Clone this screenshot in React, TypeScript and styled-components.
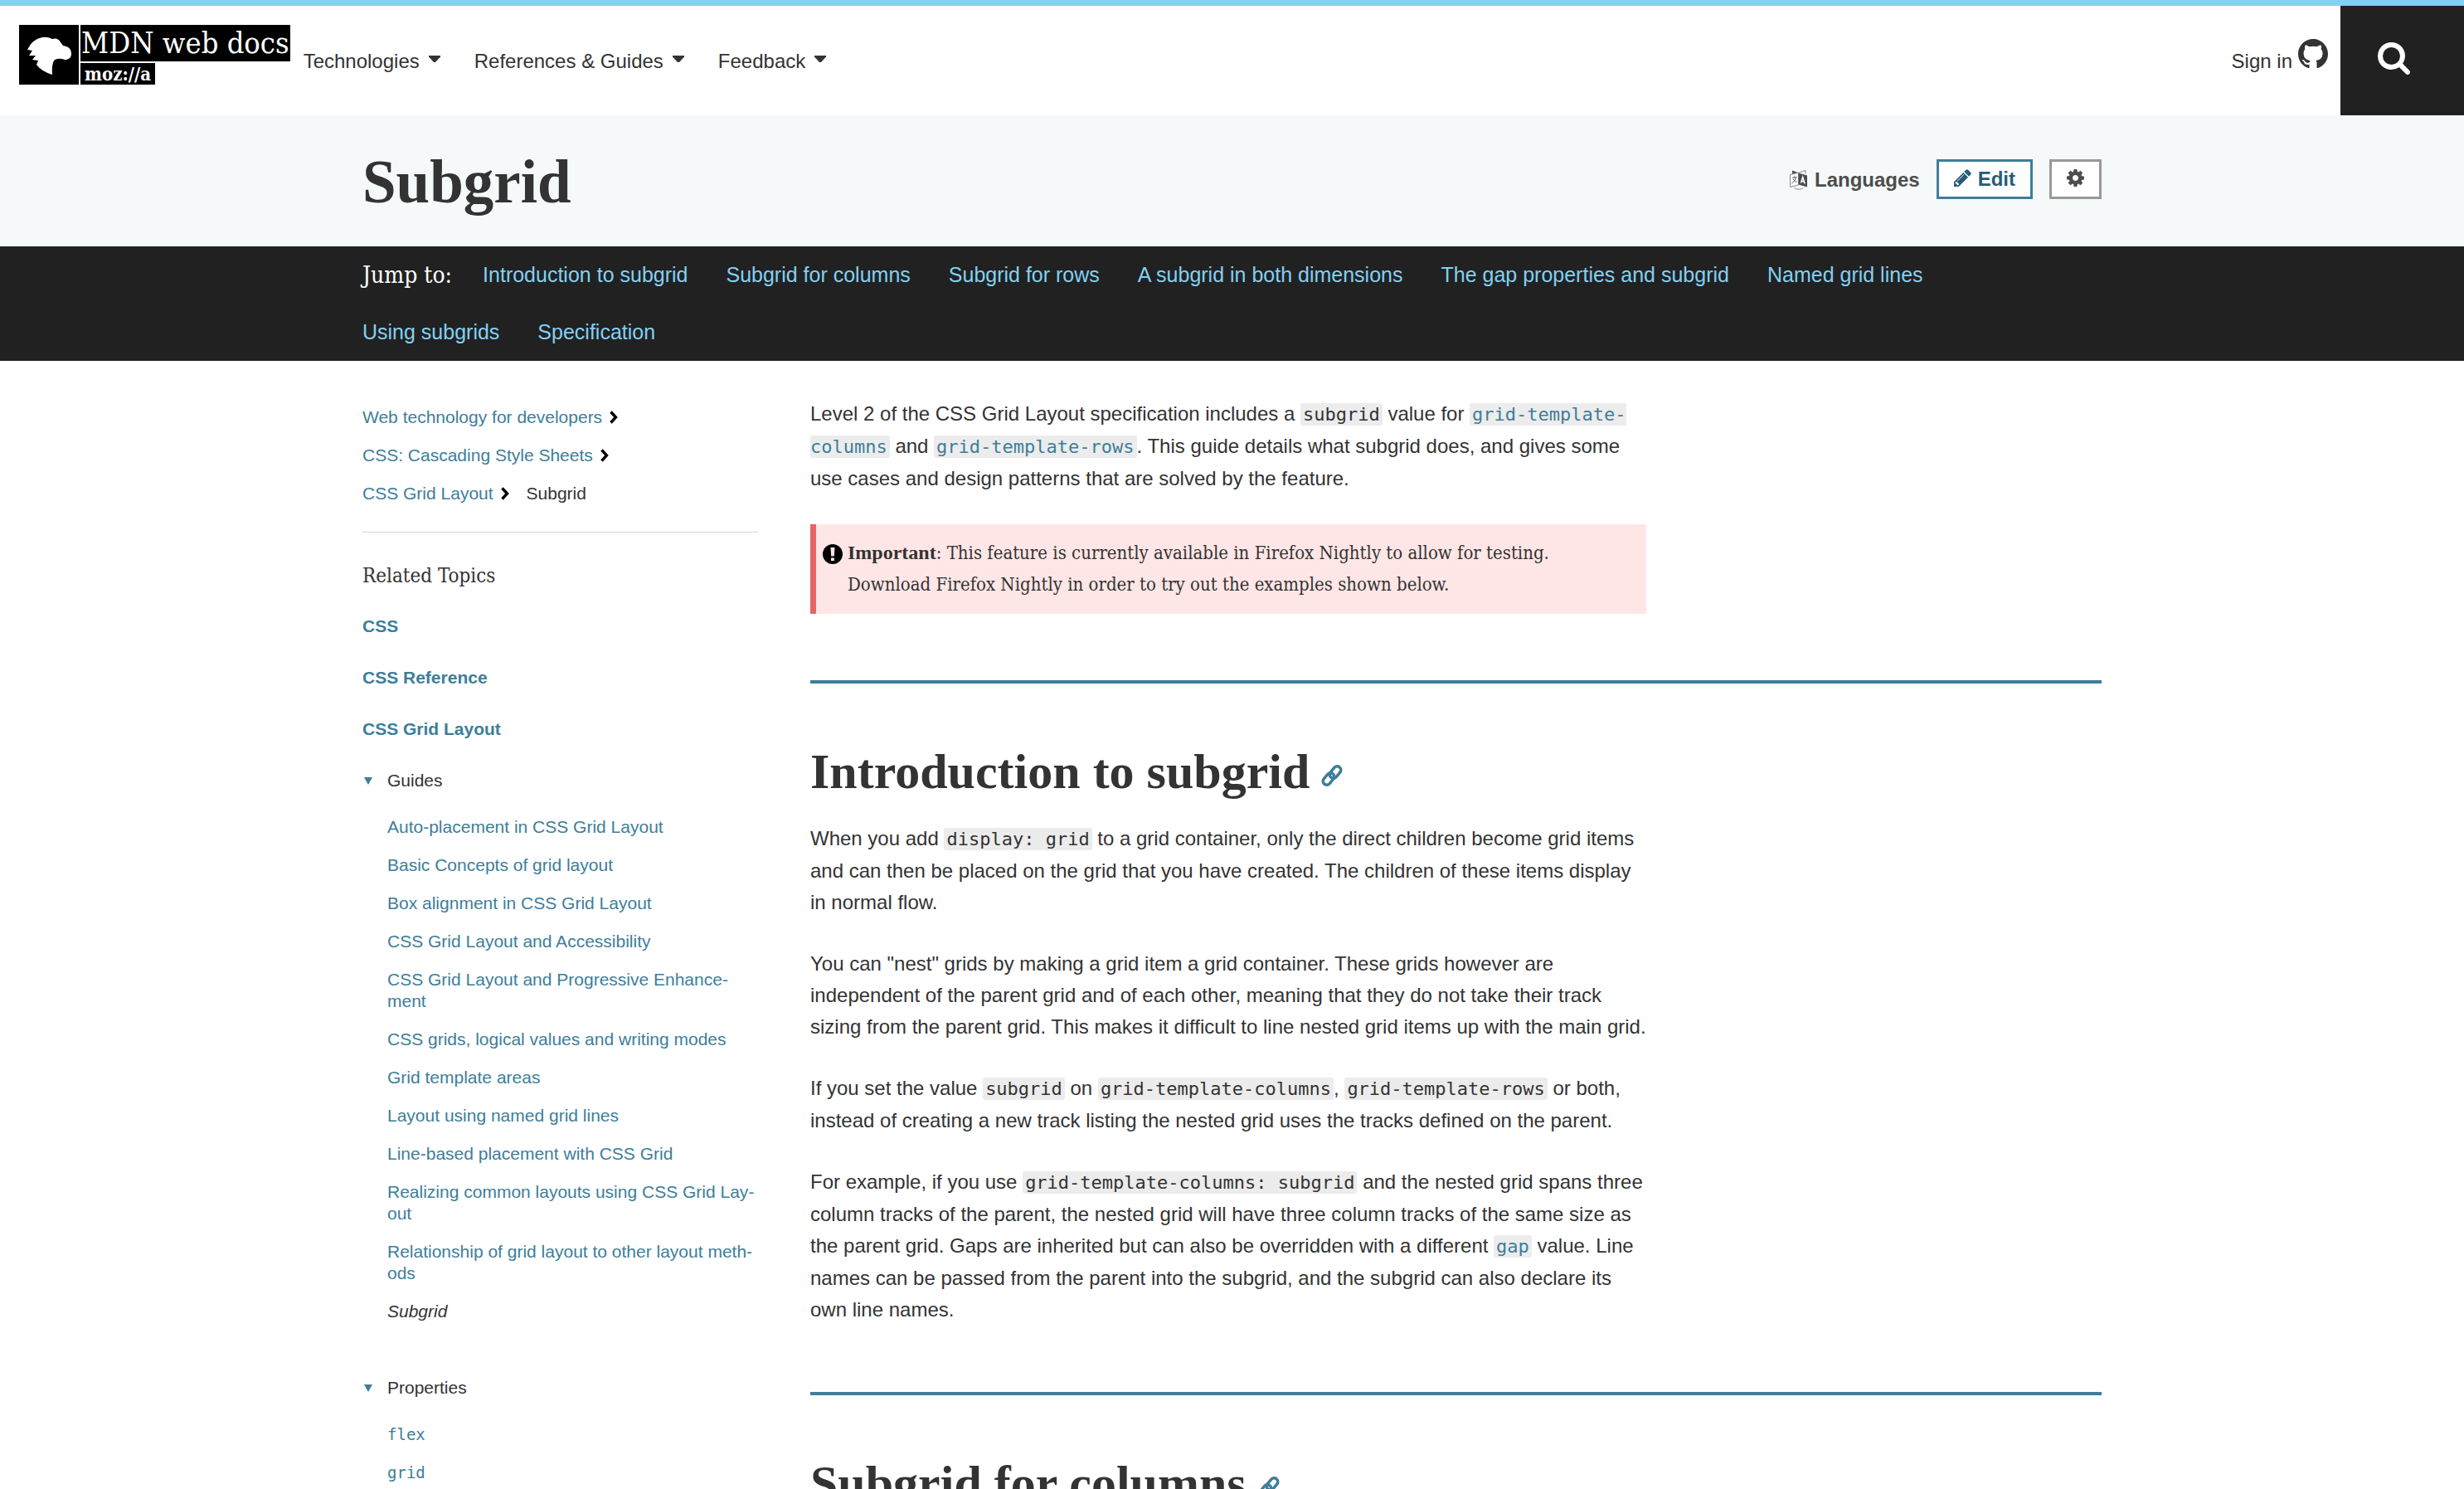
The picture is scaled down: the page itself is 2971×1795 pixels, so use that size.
import React from "react";
import styled, { createGlobalStyle } from "styled-components";

const sans = `"Liberation Sans", Arial, sans-serif`;
const slab = `"DejaVu Serif Condensed", "DejaVu Serif", serif`;
const serif = `"Liberation Serif", "Times New Roman", serif`;
const mono = `"DejaVu Sans Mono", "Liberation Mono", monospace`;

const ink = "#333";
const link = "#3d7e9a";
const dark = "#212121";

const GlobalStyle = createGlobalStyle`
  *, *::before, *::after { box-sizing: border-box; }
  body {
    margin: 0;
    background: #fff;
    color: ${ink};
    font: 24px/38px ${sans};
  }
  h1, h2, h3, p, ul, ol { margin: 0; padding: 0; }
  ul, ol { list-style: none; }
  a { color: ${link}; text-decoration: none; }
  button { font: inherit; color: inherit; cursor: pointer; }
  svg { display: block; flex: none; }
`;

/* ---------- icons ---------- */

const GithubIcon = () => (
  <svg width="36" height="36" viewBox="0 0 16 16" fill={ink} aria-hidden="true">
    <path d="M8 0C3.58 0 0 3.58 0 8c0 3.54 2.29 6.53 5.47 7.59.4.07.55-.17.55-.38 0-.19-.01-.82-.01-1.49-2.01.37-2.53-.49-2.69-.94-.09-.23-.48-.94-.82-1.13-.28-.15-.68-.52-.01-.53.63-.01 1.08.58 1.23.82.72 1.21 1.87.87 2.33.66.07-.52.28-.87.51-1.07-1.78-.2-3.64-.89-3.64-3.95 0-.87.31-1.59.82-2.15-.08-.2-.36-1.02.08-2.12 0 0 .67-.21 2.2.82.64-.18 1.32-.27 2-.27.68 0 1.36.09 2 .27 1.53-1.04 2.2-.82 2.2-.82.44 1.1.16 1.92.08 2.12.51.56.82 1.27.82 2.15 0 3.07-1.87 3.75-3.65 3.95.29.25.54.73.54 1.48 0 1.07-.01 1.93-.01 2.2 0 .21.15.46.55.38A8.013 8.013 0 0016 8c0-4.42-3.58-8-8-8z" />
  </svg>
);

const SearchIcon = () => (
  <svg width="39" height="39" viewBox="64 128 1664 1664" fill="#fff" aria-hidden="true">
    <path d="M1216 832q0-185-131.5-316.5t-316.5-131.5-316.5 131.5-131.5 316.5 131.5 316.5 316.5 131.5 316.5-131.5 131.5-316.5zm512 832q0 52-38 90t-90 38q-54 0-90-38l-343-342q-179 124-399 124-143 0-273.5-55.5t-225-150-150-225-55.5-273.5 55.5-273.5 150-225 225-150 273.5-55.5 273.5 55.5 225 150 150 225 55.5 273.5q0 220-124 399l343 343q37 37 37 90z" />
  </svg>
);

const PencilIcon = () => (
  <svg width="21" height="21" viewBox="128 128 1536 1536" fill="#285c76" aria-hidden="true">
    <path d="M491 1536l91-91-235-235-91 91v107h128v128h107zm523-928q0-22-22-22-10 0-17 7l-542 542q-7 7-7 17 0 22 22 22 10 0 17-7l542-542q7-7 7-17zm-54-192l416 416-832 832h-416v-416zm683 96q0 53-37 90l-166 166-416-416 166-165q36-38 90-38 53 0 91 38l235 234q37 39 37 91z" />
  </svg>
);

const CogIcon = () => (
  <svg width="21" height="21" viewBox="128 128 1536 1536" fill="#4d4d4d" aria-hidden="true">
    <path d="M1152 896q0-106-75-181t-181-75-181 75-75 181 75 181 181 75 181-75 75-181zm512-109v222q0 12-8 23t-20 13l-185 28q-19 54-39 91 35 50 107 138 10 12 10 25t-9 23q-27 37-99 108t-94 71q-12 0-26-9l-138-108q-44 23-91 38-16 136-29 186-7 28-36 28h-222q-14 0-24.5-8.5t-11.5-21.5l-28-184q-49-16-90-37l-141 107q-10 9-25 9-14 0-25-11-126-114-165-168-7-10-7-23 0-12 8-23 15-21 51-66.5t54-70.5q-27-50-41-99l-183-27q-13-2-21-12.5t-8-23.5v-222q0-12 8-23t19-13l186-28q14-46 39-92-40-57-107-138-10-12-10-24 0-10 9-23 26-36 98.5-107.5t94.5-71.5q13 0 26 10l138 107q44-23 91-38 16-136 29-186 7-28 36-28h222q14 0 24.5 8.5t11.5 21.5l28 184q49 16 90 37l142-107q9-9 24-9 13 0 25 10 129 119 165 170 7 8 7 22 0 12-8 23-15 21-51 66.5t-54 70.5q26 50 41 98l183 28q13 2 21 12.5t8 23.5z" />
  </svg>
);

const LinkIcon = () => (
  <svg width="26" height="26" viewBox="0 0 26 26" fill="none" stroke={link} strokeWidth="3.500" aria-hidden="true">
    <rect x="9" y="4.500" width="16" height="9" rx="4.500" transform="rotate(-50 17 9)" />
    <rect x="1" y="12.500" width="16" height="9" rx="4.500" transform="rotate(-50 9 17)" />
  </svg>
);

const LanguagesIcon = () => (
  <svg width="22" height="24" viewBox="0 0 22 24" aria-hidden="true">
    <path d="M3 0.500 L10.500 3.200 L3 5z" fill="#4d4d4d" />
    <path d="M10.500 3.200 L19 0.500 V4.500 M0.500 5.500 L10.500 3.200 V18 L0.500 20.500z" fill="none" stroke="#8a8a8a" />
    <path d="M10.500 3.500 L21 6.500 V20.500 L10.500 17.500z" fill="#4d4d4d" />
    <path d="M13.500 15.500 L15.700 8.500 L18.200 16.500 M14.200 13.200 L17.300 14" fill="none" stroke="#fff" strokeWidth="1.500" />
    <path d="M3 9.500 L8.500 8.500 M5.500 7.500 V9 M7.500 9 Q6 14 2.500 16 M4 11 Q6 13.500 8.500 14.500" fill="none" stroke="#666" />
    <path d="M5.500 21.500 Q11 25 16.500 21.500" fill="none" stroke="#8a8a8a" />
  </svg>
);

const AlertIcon = () => (
  <svg width="24" height="24" viewBox="0 0 24 24" aria-hidden="true">
    <circle cx="12" cy="12" r="12" fill="#000" />
    <path d="M9.500 4h5l-.7 10.500h-3.600zM10 16.500h4v3.500h-4z" fill="#ffe6e6" />
  </svg>
);

const ChevronIcon = () => (
  <svg width="10" height="16" viewBox="0 0 10 16" aria-hidden="true">
    <path d="M1.500 1.500 L7.500 8 L1.500 14.500" fill="none" stroke="#000" strokeWidth="3.400" />
  </svg>
);

const CaretIcon = () => (
  <svg width="14" height="8" viewBox="0 0 14 8" fill={ink} aria-hidden="true">
    <path d="M0 0h14v1.500L8 8H6L0 1.500z" />
  </svg>
);

const TriangleIcon = () => (
  <svg width="10" height="9" viewBox="0 0 10 9" fill={link} aria-hidden="true">
    <path d="M0 0h10L5 9z" />
  </svg>
);

const DinoIcon = () => (
  <svg width="72" height="72" viewBox="0 0 72 72" aria-hidden="true">
    <rect width="72" height="72" fill="#000" />
    <path
      d="M10 30 Q16 17 28 15 Q34 14 40 17 Q47 15 50 21 L53 25 Q60 26 62 30 Q64 35 62 39 Q58 44 52 41 Q45 40 42 43 Q39 49 40 60 Q27 56 21 48 L23 43 L16 42 L20 37 L12 37 L16 31z"
      fill="#fff"
    />
  </svg>
);

/* ---------- header ---------- */

const Header = styled.header`
  display: flex;
  height: 139px;
  border-top: 7px solid #83d0f2;
`;

const Logo = styled.a`
  display: grid;
  grid-template-columns: 72px auto;
  grid-template-rows: 44px 26px;
  gap: 2px;
  align-self: flex-start;
  justify-items: start;
  padding: 23px 0 0 23px;
  color: #fff;
  font-family: ${slab};

  svg { grid-row: 1 / 3; }
`;

const LogoName = styled.span`
  padding: 0 1px;
  background: #000;
  font-size: 36px;
  line-height: 44px;
  white-space: nowrap;
`;

const LogoBrand = styled.span`
  padding: 0 5px;
  background: #000;
  font-size: 22px;
  font-weight: 700;
  line-height: 26px;
`;

const MainNav = styled.nav`
  flex: 1;
  padding: 48px 0 0 16px;

  ul { display: flex; gap: 41px; }
`;

const NavButton = styled.button`
  display: flex;
  align-items: center;
  gap: 11px;
  padding: 0;
  border: 0;
  background: none;

  svg { margin-bottom: 6px; }
`;

const SignIn = styled.a`
  display: flex;
  align-self: flex-start;
  gap: 7px;
  padding: 40px 15px 0 0;
  color: ${ink};

  span { padding-top: 8px; }
`;

const SearchButton = styled.button`
  width: 149px;
  padding: 0 65px 6px 45px;
  border: 0;
  background: ${dark};
`;

/* ---------- title and jump bar ---------- */

const Container = styled.div`
  max-width: 2097px;
  margin: 0 auto;
`;

const TitleBand = styled.div`
  background: #f5f9fa;
`;

const TitleRow = styled(Container)`
  display: flex;
  align-items: center;
  justify-content: space-between;
  height: 158px;
`;

const Title = styled.h1`
  padding-top: 4px;
  font: 700 73px/80px ${serif};
`;

const Actions = styled.div`
  display: flex;
  align-items: center;
  gap: 20px;
  padding-bottom: 4px;
  font-weight: 700;
`;

const Action = styled.button<{ $edge?: string; $tone?: string }>`
  display: flex;
  align-items: center;
  gap: 8px;
  height: 48px;
  padding: ${(p) => (p.$edge ? "0 18px" : "2px 0 0")};
  border: ${(p) => (p.$edge ? `3px solid ${p.$edge}` : "0")};
  background: ${(p) => (p.$edge ? "#fff" : "none")};
  color: ${(p) => p.$tone ?? "#4d4d4d"};

  svg { margin-bottom: ${(p) => (p.$edge ? 4 : 0)}px; }
`;

const JumpBand = styled.nav`
  background: ${dark};
`;

const JumpList = styled(Container).attrs({ as: "ul" })`
  display: flex;
  flex-wrap: wrap;
  font-size: 25px;
  line-height: 69px;

  a { color: #83d0f2; }
`;

const JumpItem = styled.li`
  padding-right: 46px;
`;

const JumpLabel = styled.li`
  padding-right: 37px;
  color: #fff;
  font-family: ${slab};
  font-size: 28px;
`;

/* ---------- body ---------- */

const Columns = styled(Container)`
  display: grid;
  grid-template-columns: 477px 1fr;
  gap: 63px;
  padding-top: 45px;
`;

const Sidebar = styled.aside`
  font-size: 21px;
  line-height: 26px;
`;

const Crumbs = styled.ol`
  display: flex;
  flex-wrap: wrap;
  padding-bottom: 23px;
  border-bottom: 1px solid #d8d8d8;
  line-height: 46px;
`;

const Crumb = styled.li`
  display: flex;
  align-items: center;
  gap: 9px;
  padding-right: 21px;
`;

const SidebarTitle = styled.h3`
  margin: 34px 0 30px;
  font: 400 24px/36px ${slab};
`;

const TopicLink = styled.a`
  display: block;
  margin-bottom: 36px;
  font-weight: 700;
`;

const TopicGroup = styled.details`
  margin-bottom: 66px;
`;

const GroupLabel = styled.summary`
  display: flex;
  align-items: center;
  gap: 18px;
  padding-left: 2px;
  cursor: pointer;
  list-style: none;
`;

const GroupList = styled.ul`
  display: grid;
  gap: 20px;
  margin-top: 30px;
  padding-left: 30px;
`;

const PropertyLink = styled.a`
  font-family: ${mono};
  font-size: 19px;
`;

const Article = styled.main`
  min-width: 0;
`;

const Paragraph = styled.p`
  max-width: 1008px;
  margin-bottom: 36px;
`;

const Code = styled.code`
  padding: 1px 3px;
  border-radius: 3px;
  background: #ececec;
  font-family: ${mono};
  font-size: 22px;
`;

const Note = styled.div`
  display: flex;
  gap: 6px;
  max-width: 1008px;
  padding: 15px 40px 16px 8px;
  border-left: 7px solid #e66465;
  background: #ffe6e6;
  font-family: ${slab};
  font-size: 22px;

  svg { margin-top: 9px; }
  strong { font-family: ${serif}; font-size: 24px; }
`;

const Section = styled.section`
  margin-top: 80px;
  border-top: 4px solid ${link};
  padding-top: 70px;
`;

const SectionTitle = styled.h2`
  display: flex;
  align-items: center;
  gap: 14px;
  margin-bottom: 26px;
  font: 700 60px/72px ${serif};

  a { padding-top: 10px; }
`;

const guides = [
  "Auto-placement in CSS Grid Layout",
  "Basic Concepts of grid layout",
  "Box alignment in CSS Grid Layout",
  "CSS Grid Layout and Accessibility",
  "CSS Grid Layout and Progressive Enhance\u00adment",
  "CSS grids, logical values and writing modes",
  "Grid template areas",
  "Layout using named grid lines",
  "Line-based placement with CSS Grid",
  "Realizing common layouts using CSS Grid Lay\u00adout",
  "Relationship of grid layout to other layout meth\u00adods",
];

const jumps = [
  "Introduction to subgrid",
  "Subgrid for columns",
  "Subgrid for rows",
  "A subgrid in both dimensions",
  "The gap properties and subgrid",
  "Named grid lines",
  "Using subgrids",
  "Specification",
];

const Heading = ({ id, children }: { id: string; children: React.ReactNode }) => (
  <SectionTitle id={id}>
    {children}
    <a href={`#${id}`} aria-label="Permalink">
      <LinkIcon />
    </a>
  </SectionTitle>
);

export default function App() {
  return (
    <>
      <GlobalStyle />
      <Header>
        <Logo href="#">
          <DinoIcon />
          <LogoName>MDN web docs</LogoName>
          <LogoBrand>moz://a</LogoBrand>
        </Logo>
        <MainNav>
          <ul>
            {["Technologies", "References & Guides", "Feedback"].map((label) => (
              <li key={label}>
                <NavButton type="button">
                  {label}
                  <CaretIcon />
                </NavButton>
              </li>
            ))}
          </ul>
        </MainNav>
        <SignIn href="#">
          <span>Sign in</span>
          <GithubIcon />
        </SignIn>
        <SearchButton type="button" aria-label="Search">
          <SearchIcon />
        </SearchButton>
      </Header>

      <TitleBand>
        <TitleRow>
          <Title>Subgrid</Title>
          <Actions>
            <Action type="button">
              <LanguagesIcon />
              Languages
            </Action>
            <Action type="button" $edge={link} $tone="#285c76">
              <PencilIcon />
              Edit
            </Action>
            <Action type="button" $edge="#999" aria-label="Settings">
              <CogIcon />
            </Action>
          </Actions>
        </TitleRow>
      </TitleBand>

      <JumpBand>
        <JumpList>
          <JumpLabel>Jump to:</JumpLabel>
          {jumps.map((label) => (
            <JumpItem key={label}>
              <a href="#">{label}</a>
            </JumpItem>
          ))}
        </JumpList>
      </JumpBand>

      <Columns>
        <Sidebar>
          <Crumbs>
            {["Web technology for developers", "CSS: Cascading Style Sheets", "CSS Grid Layout"].map((label) => (
              <Crumb key={label}>
                <a href="#">{label}</a>
                <ChevronIcon />
              </Crumb>
            ))}
            <Crumb>Subgrid</Crumb>
          </Crumbs>
          <SidebarTitle>Related Topics</SidebarTitle>
          <TopicLink href="#">CSS</TopicLink>
          <TopicLink href="#">CSS Reference</TopicLink>
          <TopicLink href="#">CSS Grid Layout</TopicLink>
          <TopicGroup open>
            <GroupLabel>
              <TriangleIcon />
              Guides
            </GroupLabel>
            <GroupList>
              {guides.map((label) => (
                <li key={label}>
                  <a href="#">{label}</a>
                </li>
              ))}
              <li>
                <em>Subgrid</em>
              </li>
            </GroupList>
          </TopicGroup>
          <TopicGroup open>
            <GroupLabel>
              <TriangleIcon />
              Properties
            </GroupLabel>
            <GroupList>
              {["flex", "grid"].map((label) => (
                <li key={label}>
                  <PropertyLink href="#">{label}</PropertyLink>
                </li>
              ))}
            </GroupList>
          </TopicGroup>
        </Sidebar>

        <Article>
          <Paragraph>
            Level 2 of the CSS Grid Layout specification includes a <Code>subgrid</Code> value for{" "}
            <a href="#"><Code>grid-template-columns</Code></a> and <a href="#"><Code>grid-template-rows</Code></a>. This
            guide details what subgrid does, and gives some use cases and design patterns that are solved by the
            feature.
          </Paragraph>
          <Note>
            <AlertIcon />
            <p>
              <strong>Important</strong>: This feature is currently available in Firefox Nightly to allow for testing.
              Download Firefox Nightly in order to try out the examples shown below.
            </p>
          </Note>

          <Section>
            <Heading id="introduction">Introduction to subgrid</Heading>
            <Paragraph>
              When you add <Code>display: grid</Code> to a grid container, only the direct children become grid items
              and can then be placed on the grid that you have created. The children of these items display in normal
              flow.
            </Paragraph>
            <Paragraph>
              You can "nest" grids by making a grid item a grid container. These grids however are independent of the
              parent grid and of each other, meaning that they do not take their track sizing from the parent grid.
              This makes it difficult to line nested grid items up with the main grid.
            </Paragraph>
            <Paragraph>
              If you set the value <Code>subgrid</Code> on <Code>grid-template-columns</Code>,{" "}
              <Code>grid-template-rows</Code> or both, instead of creating a new track listing the nested grid uses the
              tracks defined on the parent.
            </Paragraph>
            <Paragraph>
              For example, if you use <Code>grid-template-columns: subgrid</Code> and the nested grid spans three
              column tracks of the parent, the nested grid will have three column tracks of the same size as the parent
              grid. Gaps are inherited but can also be overridden with a different <a href="#"><Code>gap</Code></a>{" "}
              value. Line names can be passed from the parent into the subgrid, and the subgrid can also declare its
              own line names.
            </Paragraph>
          </Section>

          <Section>
            <Heading id="columns">Subgrid for columns</Heading>
          </Section>
        </Article>
      </Columns>
    </>
  );
}
